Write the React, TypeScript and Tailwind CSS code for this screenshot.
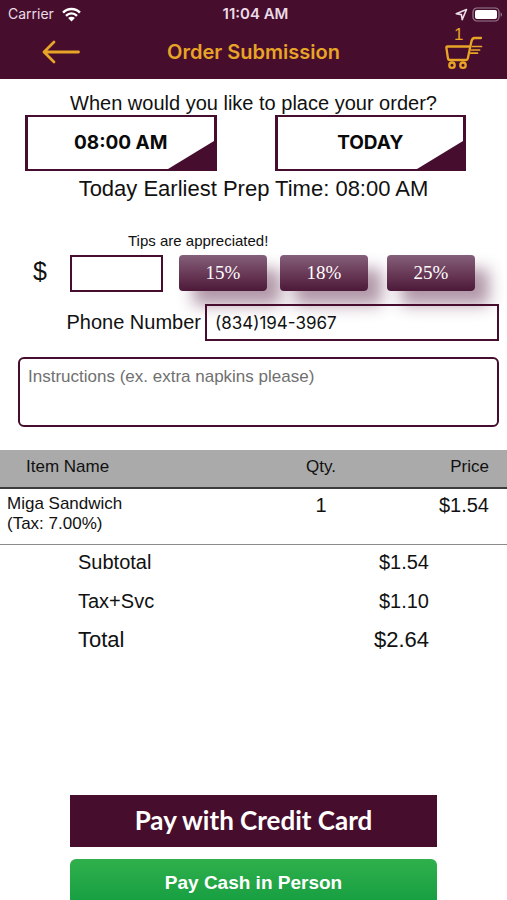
import React from "react";

type Item = { name: string; tax: string; qty: number; price: string };

const items: Item[] = [
  { name: "Miga Sandwich", tax: "(Tax: 7.00%)", qty: 1, price: "$1.54" },
];

function StatusBar() {
  return (
    <div className="grid h-7 grid-cols-3 items-center pr-1 pl-2 font-['Inter',sans-serif] text-sm leading-4 text-[#eadbe6]">
      <div className="flex items-center gap-2">
        <span>Carrier</span>
        <svg width="19" height="15" viewBox="0 0 18 14" fill="none" stroke="#fff" strokeWidth="2.3" aria-hidden="true">
          <path d="M1 5.2C5.4 0.6 12.6 0.6 17 5.2" />
          <path d="M3.8 8.2C6.8 5.2 11.2 5.2 14.2 8.2" />
          <path d="M9 13.6L5.8 10.3C7.6 8.7 10.4 8.7 12.2 10.3Z" fill="#fff" stroke="none" />
        </svg>
      </div>
      <div className="text-center text-[15px] font-semibold">11:04 AM</div>
      <div className="flex items-center justify-end gap-1">
        <svg width="13" height="13" viewBox="0 0 13 13" fill="none" stroke="#eadbe6" strokeWidth="1.6" strokeLinejoin="round" aria-hidden="true">
          <path d="M11.5 1.5L1.2 5.8L6.4 6.6L7.2 11.6Z" />
        </svg>
        <svg width="31" height="15" viewBox="0 0 31 15" fill="none" aria-hidden="true">
          <rect x="1" y="1" width="26" height="13" rx="4" stroke="#9a7f92" strokeWidth="1.2" />
          <rect x="3" y="3" width="22" height="9" rx="2" fill="#fff" />
          <path d="M28.6 5.2C30.4 6 30.4 9 28.6 9.8Z" fill="#9a7f92" />
        </svg>
      </div>
    </div>
  );
}

function NavBar() {
  return (
    <div className="grid grid-cols-[80px_1fr_80px] items-start pb-2 text-[#e8a427]">
      <button type="button" aria-label="Back" className="mt-3 justify-self-end">
        <svg width="38" height="24" viewBox="0 0 38 24" fill="none" stroke="currentColor" strokeWidth="2.8" strokeLinecap="round" strokeLinejoin="round">
          <path d="M36.5 12H2M12 2L2 12L12 22" />
        </svg>
      </button>
      <h1 className="mt-3 text-center font-['Inter',sans-serif] text-xl leading-6 font-semibold">Order Submission</h1>
      <button type="button" aria-label="Cart, 1 item" className="flex h-[43px] flex-col items-start pl-[18px]">
        <span className="h-2 pl-[9px] text-[17px] leading-[14px]">1</span>
        <svg width="38" height="34" viewBox="0 0 38 34" fill="none" stroke="currentColor" strokeWidth="2.3" strokeLinecap="round" strokeLinejoin="round">
          <path d="M36 2H29.5C27.5 2 27 3 26.4 5.4L22.8 22.5Q22.5 24 21 24H4.8C3.4 24 3.1 23.5 2.9 22L1.4 11.8Q1.2 10.5 2.4 10.5H25" />
          <path d="M27.5 10.5H36.5M26.6 14H34.6M25.8 17.2H32.5" strokeWidth="1.7" />
          <circle cx="7" cy="29.2" r="2.7" />
          <circle cx="18" cy="29.2" r="2.7" />
        </svg>
      </button>
    </div>
  );
}

function PickerButton({ children }: { children: React.ReactNode }) {
  return (
    <button
      type="button"
      className="relative h-14 flex-1 border-x-[3px] border-y-2 border-[#470d2e] font-['Inter',sans-serif] text-[19px] leading-6 font-bold text-[#0a0a0a]"
    >
      {children}
      <svg className="absolute right-0 bottom-0" width="46" height="28" viewBox="0 0 46 28" aria-hidden="true">
        <path d="M0 28L46 0V28Z" fill="#470d2e" />
      </svg>
    </button>
  );
}

const tipClass =
  "h-9 w-[88px] rounded bg-linear-to-b from-[#85607a] via-[#6a3b58] via-50% to-[#4c1939] font-['Liberation_Serif',serif] text-[19px] leading-5 text-white shadow-[14px_14px_16px_rgba(82,25,62,0.45)]";

export default function App() {
  return (
    <div className="flex h-screen flex-col bg-white font-['Liberation_Sans',Arial,sans-serif] text-[#111]">
      <header className="shrink-0 bg-[#470d2c]">
        <StatusBar />
        <NavBar />
      </header>

      <main className="flex-1 overflow-y-auto [scrollbar-width:none]">
        <section className="pt-3 text-center">
          <h2 className="text-xl leading-6">When would you like to place your order?</h2>
          <div className="flex gap-[58px] pr-[41px] pl-[25px]">
            <PickerButton>08:00 AM</PickerButton>
            <PickerButton>TODAY</PickerButton>
          </div>
          <p className="pt-1 text-[22px] leading-7">Today Earliest Prep Time: 08:00 AM</p>
        </section>

        <section className="pt-7">
          <p className="pl-32 text-[15px] leading-5">Tips are appreciated!</p>
          <div className="flex pt-1">
            <label htmlFor="tip" className="w-[70px] pl-[33px] text-[25px] leading-8">$</label>
            <input id="tip" type="text" className="h-[37px] w-[93px] border-2 border-[#470d2e] px-2 text-lg outline-none" />
            <button type="button" className={tipClass + " ml-4"}>15%</button>
            <button type="button" className={tipClass + " ml-[13px]"}>18%</button>
            <button type="button" className={tipClass + " ml-[19px]"}>25%</button>
          </div>
          <div className="flex pt-3 pr-2">
            <label htmlFor="phone" className="w-[205px] pr-1 text-right text-xl leading-9">Phone Number</label>
            <input
              id="phone"
              type="tel"
              defaultValue="(834)194-3967"
              className="h-[37px] min-w-0 flex-1 border-2 border-[#470d2e] px-2 font-['Inter',sans-serif] text-[17px] outline-none"
            />
          </div>
          <div className="pt-4 pr-2 pl-[18px]">
            <textarea
              aria-label="Instructions"
              placeholder="Instructions (ex. extra napkins please)"
              className="block h-[70px] w-full resize-none rounded-md border-2 border-[#470d2e] px-2 py-1.5 text-[17px] leading-6 outline-none placeholder:text-[#707070]"
            />
          </div>
        </section>

        <table className="mt-[23px] w-full table-fixed border-collapse">
          <thead>
            <tr className="h-[38px] border-b-2 border-[#3c3c3c] bg-[#aaaaaa] text-[17px] leading-5">
              <th className="pb-[3px] pl-[26px] text-left font-normal">Item Name</th>
              <th className="w-[110px] pb-[3px] font-normal">Qty.</th>
              <th className="w-[131px] pr-[18px] pb-[3px] text-right font-normal">Price</th>
            </tr>
          </thead>
          <tbody>
            {items.map((item) => (
              <tr key={item.name} className="h-14 border-b border-[#8c8c8c] align-top">
                <td className="pt-[5px] pl-[7px] text-[17px] leading-5">
                  {item.name}
                  <br />
                  {item.tax}
                </td>
                <td className="pt-1 text-center text-xl leading-6">{item.qty}</td>
                <td className="pt-1 pr-[18px] text-right text-xl leading-6">{item.price}</td>
              </tr>
            ))}
          </tbody>
        </table>

        <dl className="px-[78px] text-xl leading-[34px]">
          <div className="flex justify-between">
            <dt>Subtotal</dt>
            <dd>$1.54</dd>
          </div>
          <div className="flex justify-between pt-[5px]">
            <dt>Tax+Svc</dt>
            <dd>$1.10</dd>
          </div>
          <div className="flex justify-between pt-[5px] text-[22px]">
            <dt>Total</dt>
            <dd>$2.64</dd>
          </div>
        </dl>

        <div className="flex flex-col gap-3 px-[70px] pt-[138px] pb-4">
          <button type="button" className="h-[52px] bg-[#470d2c] font-['Lato',sans-serif] text-[26px] font-bold text-white">
            Pay with Credit Card
          </button>
          <button type="button" className="h-[50px] rounded-md bg-linear-to-b from-[#2fb04c] to-[#0f9c40] text-[19px] font-bold text-white">
            Pay Cash in Person
          </button>
        </div>
      </main>
    </div>
  );
}
